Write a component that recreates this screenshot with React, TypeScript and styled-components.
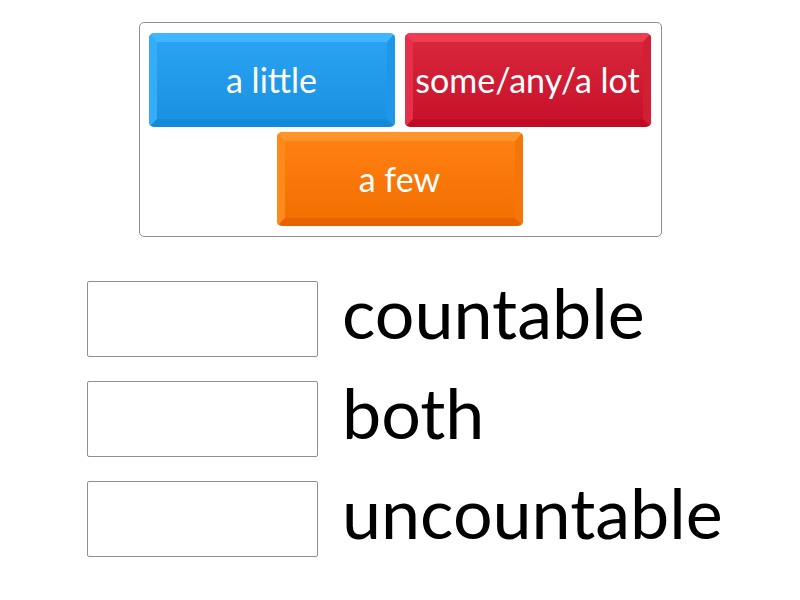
import React from 'react';
import styled, { createGlobalStyle } from 'styled-components';

const GlobalStyle = createGlobalStyle`
  html, body {
    margin: 0;
    padding: 0;
    background: #ffffff;
    font-family: Lato, "Open Sans", sans-serif;
  }
`;

const Page = styled.div`
  width: 800px;
  height: 600px;
  padding-top: 22px;
  box-sizing: border-box;
  display: flex;
  flex-direction: column;
`;

const TileTray = styled.div`
  width: 523px;
  margin: 0 auto;
  box-sizing: border-box;
  border: 1px solid #8f8f8f;
  border-radius: 5px;
  padding: 10px 10px 10px 9px;
  display: flex;
  flex-wrap: wrap;
  justify-content: center;
  gap: 5px 10px;
`;

const palettes = {
  blue: {
    top: '#3fb6ff',
    left: '#34acf8',
    right: '#1f97e8',
    bottom: '#128ad9',
    from: '#29a3f1',
    to: '#1b91e2',
  },
  red: {
    top: '#ef3c52',
    left: '#e6304a',
    right: '#d11f36',
    bottom: '#c10b24',
    from: '#d8263c',
    to: '#c8122b',
  },
  orange: {
    top: '#ff932c',
    left: '#ff8a1c',
    right: '#f47608',
    bottom: '#e86200',
    from: '#ff8010',
    to: '#f36f02',
  },
};

type Tone = keyof typeof palettes;

const Tile = styled.div<{ $tone: Tone }>`
  width: 246px;
  height: 94px;
  box-sizing: border-box;
  border-radius: 5px;
  border-style: solid;
  border-width: 9px 8px 8px 8px;
  border-top-color: ${p => palettes[p.$tone].top};
  border-left-color: ${p => palettes[p.$tone].left};
  border-right-color: ${p => palettes[p.$tone].right};
  border-bottom-color: ${p => palettes[p.$tone].bottom};
  background: linear-gradient(${p => palettes[p.$tone].from}, ${p => palettes[p.$tone].to});
  display: flex;
  align-items: center;
  justify-content: center;
  color: #ffffff;
  font-size: 34px;
  white-space: nowrap;
  padding-bottom: 3px;
`;

const Targets = styled.div`
  margin-top: 44px;
  padding-left: 87px;
  display: flex;
  flex-direction: column;
  gap: 24px;
`;

const Row = styled.div`
  display: flex;
  align-items: center;
  height: 76px;
`;

const DropBox = styled.div`
  width: 231px;
  height: 76px;
  box-sizing: border-box;
  border: 1px solid #909090;
  border-radius: 2px;
  background: #ffffff;
`;

const Label = styled.div`
  margin-left: 24px;
  font-size: 70px;
  color: #000000;
  line-height: 1;
  padding-bottom: 14px;
`;

const tiles: { text: string; tone: Tone }[] = [
  { text: 'a little', tone: 'blue' },
  { text: 'some/any/a lot', tone: 'red' },
  { text: 'a few', tone: 'orange' },
];

const labels = ['countable', 'both', 'uncountable'];

export default function App() {
  return (
    <>
      <GlobalStyle />
      <Page>
        <TileTray>
          {tiles.map(t => (
            <Tile key={t.text} $tone={t.tone}>
              {t.text}
            </Tile>
          ))}
        </TileTray>
        <Targets>
          {labels.map(l => (
            <Row key={l}>
              <DropBox />
              <Label>{l}</Label>
            </Row>
          ))}
        </Targets>
      </Page>
    </>
  );
}
